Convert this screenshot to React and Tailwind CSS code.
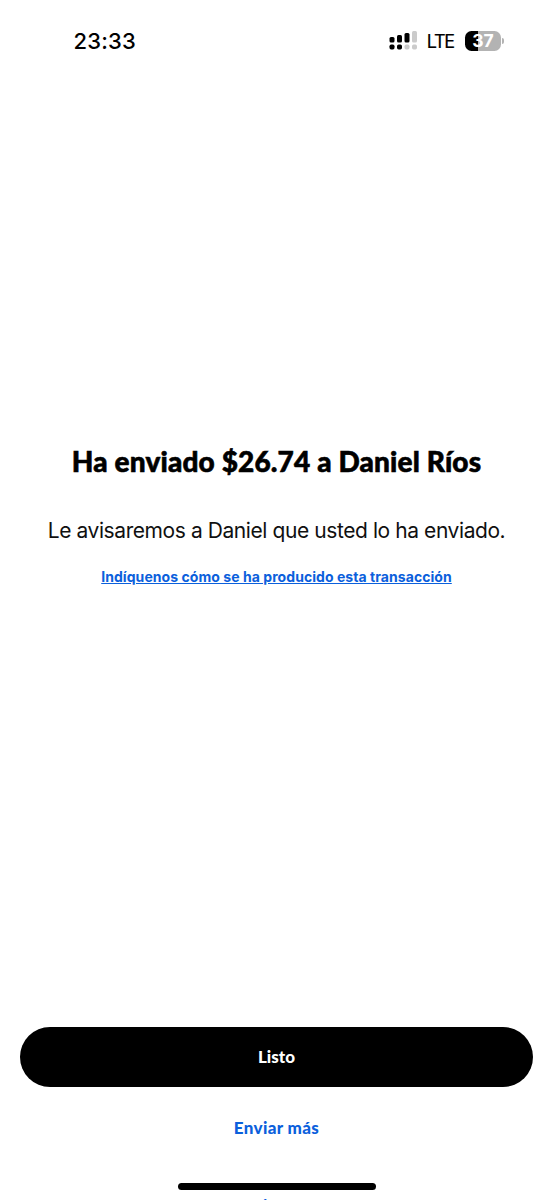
import React from 'react';

const bars = [
  { x: 0.5, y: 6, h: 5.5, color: '#000' },
  { x: 8, y: 4, h: 7.5, color: '#000' },
  { x: 15.5, y: 2, h: 9.5, color: '#000' },
  { x: 23, y: 0, h: 11.5, color: '#cbcbcb' },
];

function Signal() {
  return (
    <svg width="29" height="20" viewBox="0 0 29 20">
      {bars.map((bar) => (
        <rect key={bar.x} x={bar.x} y={bar.y} width="5" height={bar.h} rx="1.5" fill={bar.color} />
      ))}
      {bars.map((bar, i) => (
        <rect key={bar.x} x={bar.x} y="13.5" width="5" height="5" rx="1.7" fill={i < 2 ? '#000' : '#cbcbcb'} />
      ))}
    </svg>
  );
}

function Battery() {
  return (
    <div className="flex items-center gap-px">
      <div className="flex h-5 w-9 items-center justify-center rounded-[6.5px] bg-[linear-gradient(to_right,#000_37%,#b3b3b3_37%)]">
        <span className="font-['Inter',sans-serif] text-[17.5px] leading-5 font-bold text-white">37</span>
      </div>
      <div className="h-[6px] w-[2px] rounded-r-full bg-[#b3b3b3]" />
    </div>
  );
}

function StatusBar() {
  return (
    <div className="flex h-[82px] items-center justify-between pr-[49px] pl-[73.5px]">
      <p className="font-['Inter',sans-serif] text-[22px] leading-7 font-medium tracking-[0.2px] whitespace-nowrap">
        23:33
      </p>
      <div className="flex items-center">
        <Signal />
        <p className="mt-[2px] mr-[11px] ml-[9px] font-['Inter',sans-serif] text-[18px] leading-6 tracking-[-1.2px] [-webkit-text-stroke:0.2px_#000]">
          LTE
        </p>
        <Battery />
      </div>
    </div>
  );
}

function App() {
  return (
    <div className="flex h-[1200px] w-full flex-col overflow-hidden bg-white text-black">
      <StatusBar />
      <main className="flex flex-1 flex-col items-center pt-[359px] text-center whitespace-nowrap">
        <h1 className="font-['Lato',sans-serif] text-[28px] leading-10 font-black tracking-[0.15px] [-webkit-text-stroke:0.6px_#000]">
          Ha enviado $26.74 a Daniel Ríos
        </h1>
        <p className="mt-[36px] font-['Inter',sans-serif] text-[21px] leading-7 tracking-[-0.42px] text-[#101010]">
          Le avisaremos a Daniel que usted lo ha enviado.
        </p>
        <a
          href="#"
          className="mt-[22px] font-['Inter',sans-serif] text-[14px] leading-5 font-bold tracking-[0.06px] text-[#0b60dc] underline"
        >
          Indíquenos cómo se ha producido esta transacción
        </a>
      </main>
      <footer className="flex h-[174px] flex-col items-center px-5 font-['Lato',sans-serif] text-[17px] font-black">
        <button type="button" className="mt-px h-[60px] w-full shrink-0 rounded-full bg-black text-white">
          Listo
        </button>
        <button type="button" className="mt-[29px] h-6 shrink-0 leading-6 tracking-[0.35px] text-[#0b60dc]">
          Enviar más
        </button>
        <div className="mt-[43px] h-[7px] w-[198px] shrink-0 rounded-full bg-black" />
        {/* next action, mostly below the fold */}
        <p className="mt-[4px] shrink-0 leading-6 tracking-[0.35px] text-[#0b60dc]">Enviar más</p>
      </footer>
    </div>
  );
}

export default App;
